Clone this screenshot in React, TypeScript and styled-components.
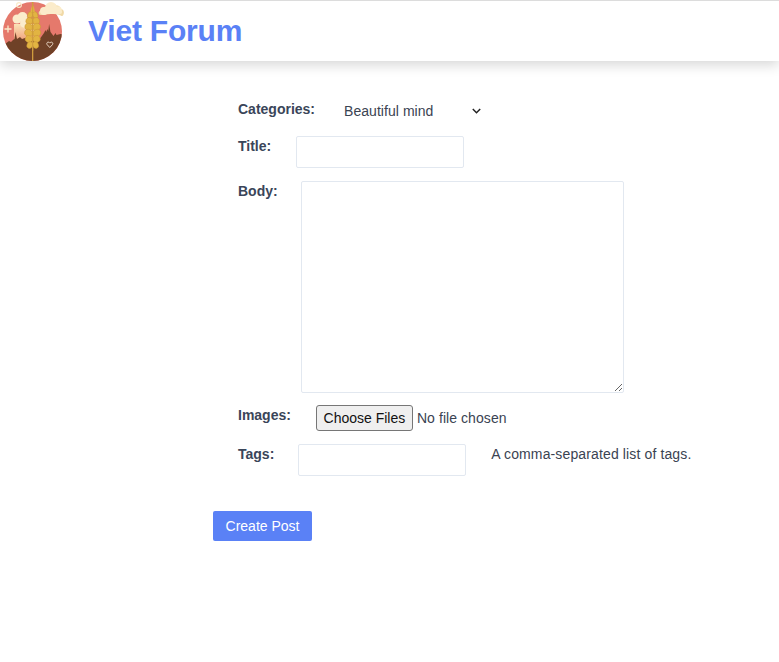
import React from "react";
import styled, { createGlobalStyle } from "styled-components";

const Global = createGlobalStyle`
  html, body { margin: 0; padding: 0; background: #fff; }
  body { font-family: "Liberation Sans", Arial, sans-serif; color: #2d3748; }
`;
const Page = styled.div`
  min-height: 662px;
  background: #fff;
`;
const Header = styled.header`
  height: 60px;
  border-top: 1px solid #dcdcdc;
  display: flex;
  align-items: flex-start;
  background: #fff;
  box-shadow: 0 4px 12px rgba(0, 0, 0, 0.16);
`;
const LogoSvg = styled.svg`
  width: 66px;
  height: 63px;
  margin-top: -1px;
  flex: none;
  position: relative;
  z-index: 1;
`;
const Brand = styled.h1`
  margin: 13px 0 0 22px;
  font-size: 30px;
  line-height: 34px;
  font-weight: 700;
  letter-spacing: -0.2px;
  color: #5a81f6;
`;
const Form = styled.form`
  width: 520px;
  margin-left: 213px;
  padding-top: 39px;
`;
const Row = styled.div<{ $gap: number; $height: number; $after: number }>`
  display: flex;
  align-items: flex-start;
  gap: ${(p) => p.$gap}px;
  padding-left: 25px;
  height: ${(p) => p.$height}px;
  margin-bottom: ${(p) => p.$after}px;
`;
const Label = styled.label<{ $lift?: number }>`
  font-size: 14px;
  line-height: 20px;
  font-weight: 700;
  color: #3a4559;
  margin-top: ${(p) => -(p.$lift ?? 0)}px;
`;
const chevron =
  "data:image/svg+xml;utf8," +
  encodeURIComponent(
    '<svg xmlns="http://www.w3.org/2000/svg" width="9" height="6" viewBox="0 0 9 6"><path d="M.8 1l3.700 3.700L8.200 1" fill="none" stroke="#222" stroke-width="1.500"/></svg>'
  );
const Select = styled.select`
  appearance: none;
  width: 138px;
  height: 24px;
  border: 0;
  background: #fff url("${chevron}") no-repeat right 1px center;
  font: 14px "Liberation Sans", Arial, sans-serif;
  letter-spacing: 0.05px;
  color: #3a4352;
  padding: 0;
  margin: -1px 0 0 0;
  outline: none;
`;
const TextInput = styled.input`
  box-sizing: border-box;
  width: 168px;
  height: 32px;
  border: 1px solid #e2e8f0;
  border-radius: 2px;
  background: #fff;
`;
const BodyArea = styled.textarea`
  box-sizing: border-box;
  display: block;
  width: 323px;
  height: 212px;
  border: 1px solid #e2e8f0;
  border-radius: 2px;
  background: #fff;
  margin: 0;
`;
const FileInput = styled.input`
  font: 14px "Liberation Sans", Arial, sans-serif;
  letter-spacing: 0.07px;
  color: #3a4352;
  width: 230px;
  &::file-selector-button {
    box-sizing: border-box;
    width: 97px;
    height: 26px;
    margin: 0 4px 0 0;
    padding: 0;
    border: 1px solid #767676;
    border-radius: 3px;
    background: #efefef;
    color: #111;
    font: 14px "Liberation Sans", Arial, sans-serif;
  }
`;
const Hint = styled.span`
  font-size: 14px;
  line-height: 20px;
  letter-spacing: 0.13px;
  margin-left: 1px;
  color: #3a4352;
`;
const Submit = styled.button`
  display: block;
  width: 99px;
  height: 30px;
  margin-top: 35px;
  padding: 0;
  border: 0;
  border-radius: 2px;
  background: #5a81f6;
  color: #fff;
  font: 14px "Liberation Sans", Arial, sans-serif;
`;

const grainRows = [
  { y: 15, s: 0.7 },
  { y: 21, s: 0.95 },
  { y: 27, s: 1.1 },
  { y: 33, s: 1.15 },
  { y: 39, s: 1.05 },
  { y: 45, s: 0.8 },
];

function Logo() {
  return (
    <LogoSvg viewBox="0 0 66 63" aria-hidden="true">
      <defs>
        <clipPath id="disc">
          <circle cx="32.500" cy="31.500" r="29.500" />
        </clipPath>
        <linearGradient id="glow" x1="0" y1="0" x2="0" y2="1">
          <stop offset="0" stopColor="#fbe3b8" />
          <stop offset="1" stopColor="#ee9470" />
        </linearGradient>
      </defs>
      <g clipPath="url(#disc)">
        <rect x="0" y="0" width="66" height="63" fill="#e5796c" />
        <rect x="14" y="24" width="24" height="20" fill="url(#glow)" />
        <circle cx="17" cy="19" r="4.500" fill="#fbeccb" />
        <circle cx="22.500" cy="17" r="5" fill="#fbeccb" />
        <circle cx="25" cy="23" r="5" fill="#fbeccb" />
        <path d="M0 46l5-2 4-3 2 1 2-2 1.500-1 1-7 1.500 7 3-2 2 2 3-1 6 2h8l5-7 1.500-3 .8 2 1-3 1 2 .8-7 1.400 8 3 4 2-3 1 2 4-1 5 1v36H0z" fill="#6f4127" />
      </g>
      <g fill="#f0d9a6">
        <path d="M39 14.500c-1-2 0-4 2.500-4.500 0-2.500 3-4 5-3 1-4 7-5 10-1.500 2-.5 4 1 4 3.500 3 0 4 3 3 5.500-.5 1-1 1.500-2 1.500-3-2-7-2-11-2-4 0-8 2-11.500.5z" />
      </g>
      <g fill="#fbeccb">
        <circle cx="44" cy="11" r="4" />
        <circle cx="51" cy="8" r="6" />
        <circle cx="58" cy="10" r="3.700" />
        <rect x="41" y="10" width="21" height="4" rx="2" />
      </g>
      <rect x="32" y="2" width="1.300" height="59" fill="#cf9d3e" />
      {grainRows.map(({ y, s }) => (
        <g key={y}>
          <ellipse cx={32.7 - 3.6 * s} cy={y} rx={3.6 * s} ry={3.5} fill="#e2b442" stroke="#c58f33" strokeWidth="0.400" transform={`rotate(25 ${32.7 - 3.6 * s} ${y})`} />
          <ellipse cx={32.7 + 3.6 * s} cy={y} rx={3.6 * s} ry={3.5} fill="#e2b442" stroke="#c58f33" strokeWidth="0.400" transform={`rotate(-25 ${32.7 + 3.6 * s} ${y})`} />
        </g>
      ))}
      <path d="M32.700 5c1.300 2 2 4 2 7h-4c0-3 .7-5 2-7z" fill="#e2b442" />
      <path d="M32.700 5v46" stroke="#cf9d3e" strokeWidth="1" />
      <circle cx="19" cy="5" r="2.400" fill="none" stroke="#fbeccb" strokeWidth="1.100" />
      <path d="M4.500 29h7M8 25.500v7" stroke="#fbeccb" strokeWidth="1.300" />
      <path d="M49.800 47.500l-2.600-2.800c-1.500-2 1.400-3.700 2.600-1.600 1.200-2.100 4.100-.4 2.600 1.600z" fill="none" stroke="#f4e4d4" strokeWidth="0.900" />
    </LogoSvg>
  );
}

export default function App() {
  return (
    <Page>
      <Global />
      <Header>
        <Logo />
        <Brand>Viet Forum</Brand>
      </Header>
      <Form onSubmit={(e) => e.preventDefault()}>
        <Row $gap={29} $height={26} $after={10}>
          <Label $lift={1}>Categories:</Label>
          <Select defaultValue="Beautiful mind">
            <option>Beautiful mind</option>
          </Select>
        </Row>
        <Row $gap={25} $height={32} $after={13}>
          <Label>Title:</Label>
          <TextInput type="text" />
        </Row>
        <Row $gap={23} $height={212} $after={12}>
          <Label>Body:</Label>
          <BodyArea />
        </Row>
        <Row $gap={25} $height={26} $after={13}>
          <Label>Images:</Label>
          <FileInput type="file" multiple />
        </Row>
        <Row $gap={24} $height={32} $after={0}>
          <Label>Tags:</Label>
          <TextInput type="text" />
          <Hint>A comma-separated list of tags.</Hint>
        </Row>
        <Submit type="submit">Create Post</Submit>
      </Form>
    </Page>
  );
}
